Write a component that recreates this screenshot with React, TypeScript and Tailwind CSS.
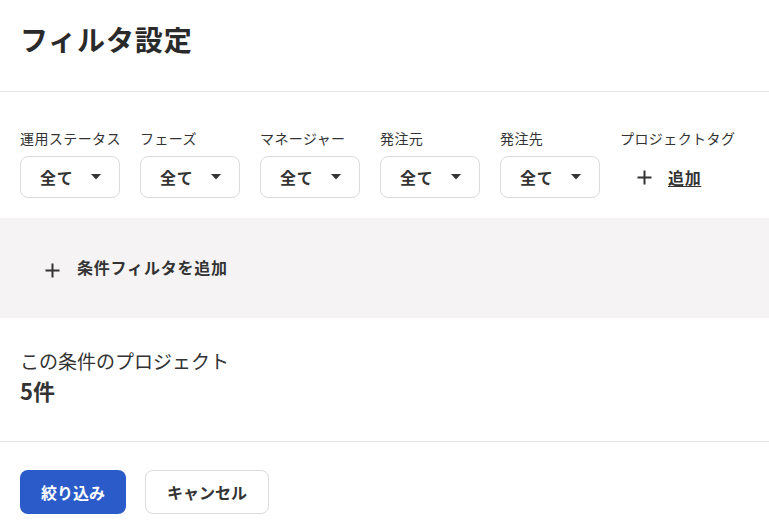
import React from "react";

const font = { fontFamily: '"Noto Sans CJK JP", "Noto Sans", sans-serif' };

function Caret() {
  return (
    <svg width="10" height="6" viewBox="0 0 10 6" className="shrink-0">
      <path d="M0 0 L10 0 L5 5.5 Z" fill="#333" />
    </svg>
  );
}

function Plus({ className = "" }: { className?: string }) {
  return (
    <svg width="15" height="15" viewBox="0 0 15 15" className={"shrink-0 " + className}>
      <path d="M7.5 0.5 V14.5 M0.5 7.5 H14.5" stroke="#333" strokeWidth="2" />
    </svg>
  );
}

const filters = ["運用ステータス", "フェーズ", "マネージャー", "発注元", "発注先"];

export default function App() {
  return (
    <div className="w-[769px] h-[531px] bg-white text-[#333] overflow-hidden" style={font}>
      <div className="px-5 pt-[19px] pb-[32px] border-b border-[#e5e5e5]">
        <h1 className="text-[28px] leading-[40px] font-bold text-[#2a2a2a] tracking-[0.03em]">フィルタ設定</h1>
      </div>
      <div className="px-5 pt-[36px] pb-5 flex gap-5">
        {filters.map((f) => (
          <div key={f} className="w-[100px] flex flex-col">
            <div className="text-[14px] leading-5 mb-2 whitespace-nowrap tracking-[0.03em]">{f}</div>
            <div className="h-[42px] rounded-lg border border-[#dcdcdc] flex items-center pl-[19px] pr-[18px] justify-between">
              <span className="text-[16px] font-bold tracking-[0.04em]">全て</span>
              <Caret />
            </div>
          </div>
        ))}
        <div className="flex flex-col">
          <div className="text-[14px] leading-5 mb-2 whitespace-nowrap tracking-[0.03em]">プロジェクトタグ</div>
          <div className="h-[42px] flex items-center pl-[17px] gap-4">
            <Plus />
            <span className="text-[16px] font-bold underline underline-offset-2 tracking-[0.04em]">追加</span>
          </div>
        </div>
      </div>
      <div className="h-[100px] bg-[#f5f3f4] flex items-center pl-[45px] pb-[2px] gap-[17px]">
        <Plus className="translate-y-[3px]" />
        <span className="text-[16px] font-bold tracking-[0.05em]">条件フィルタを追加</span>
      </div>
      <div className="px-5 pt-[30px] pb-[35px] border-b border-[#e5e5e5]">
        <div className="text-[19px] leading-[26px]">この条件のプロジェクト</div>
        <div className="text-[22px] leading-[32px] font-bold">5件</div>
      </div>
      <div className="px-5 pt-7 flex gap-[19px]">
        <button className="h-[44px] px-[21px] rounded-lg bg-[#2a5bc8] text-white text-[16px] font-bold">絞り込み</button>
        <button className="h-[44px] px-[21px] rounded-lg border border-[#dcdcdc] bg-white text-[16px] font-bold">キャンセル</button>
      </div>
    </div>
  );
}
